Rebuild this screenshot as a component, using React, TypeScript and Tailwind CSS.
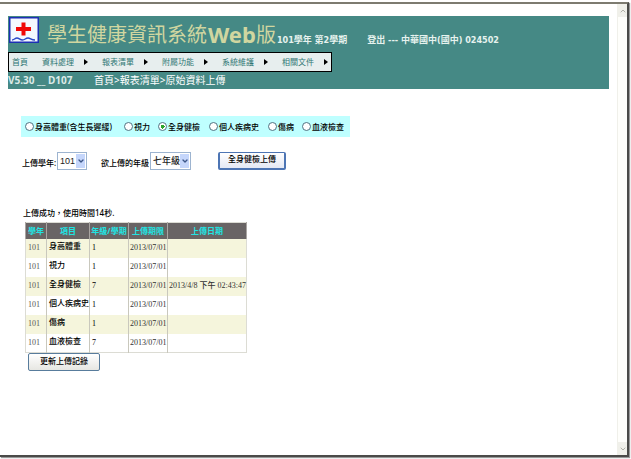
import { ChevronDown, ChevronUp } from "lucide-react";
import clsx from "clsx";

interface UploadRecord {
  year: string;
  item: string;
  grade: string;
  deadline: string;
  uploadedAt: string;
}

const menuItems = ["資料處理", "報表清單", "附屬功能", "系統維護", "相關文件"];

const uploadTypes = [
  "身高體重(含生長遲緩)",
  "視力",
  "全身健檢",
  "個人疾病史",
  "傷病",
  "血液檢查",
];

const columns = [
  { label: "學年", width: "w-[21px]" },
  { label: "項目", width: "w-[43px]" },
  { label: "年級/學期", width: "w-[39px]" },
  { label: "上傳期限", width: "w-[39px]" },
  { label: "上傳日期", width: "w-[78px]" },
];

const records: UploadRecord[] = [
  { year: "101", item: "身高體重", grade: "1", deadline: "2013/07/01", uploadedAt: "" },
  { year: "101", item: "視力", grade: "1", deadline: "2013/07/01", uploadedAt: "" },
  {
    year: "101",
    item: "全身健檢",
    grade: "7",
    deadline: "2013/07/01",
    uploadedAt: "2013/4/8 下午 02:43:47",
  },
  { year: "101", item: "個人疾病史", grade: "1", deadline: "2013/07/01", uploadedAt: "" },
  { year: "101", item: "傷病", grade: "1", deadline: "2013/07/01", uploadedAt: "" },
  { year: "101", item: "血液檢查", grade: "7", deadline: "2013/07/01", uploadedAt: "" },
];

function Logo() {
  return (
    <svg viewBox="0 0 30 26" className="h-[26px] w-[30px] shrink-0" aria-hidden="true">
      <rect x="0.75" y="0.75" width="28.5" height="24.5" fill="#f4f8ff" stroke="#1c2fb4" strokeWidth="1.5" />
      <path d="M12.5 5.5h4v4.500h5.500v4h-5.500v4.500h-4v-4.500h-5.500v-4h5.500z" fill="#f00808" />
      <path
        d="M3 23c2 0 3-2 5-2s3 2 5.500 2 3-2 5.500-2 3 2 7 2"
        fill="none"
        stroke="#2a46c8"
        strokeWidth="1.5"
      />
    </svg>
  );
}

function Header() {
  return (
    <header className="bg-[#458985] pt-px">
      <div className="flex h-[35px] items-start pl-px">
        <Logo />
        <h1 className="ml-2 flex h-[35px] items-center whitespace-nowrap text-[20px] leading-[35px] text-[#d0d6a0]">
          學生健康資訊系統
          <span className="ml-px text-[22px] font-bold">Web</span>版
        </h1>
        <p className="flex h-[35px] items-center gap-5 whitespace-nowrap pt-3 pl-px font-['DejaVu_Sans_Condensed','DejaVu_Sans','Noto_Sans_CJK_TC',sans-serif] text-[9px] font-bold text-[#e6f2ee]">
          <span>101學年 第2學期</span>
          <span>
            <a href="#logout">登出</a> --- 中華國中(國中) 024502
          </span>
        </p>
      </div>
      <nav className="flex h-5 w-[324px] items-center border border-black bg-[#e7eeee] pl-[3px] text-[8px] text-[#2f7774]">
        <a href="#home" className="w-[30px] shrink-0">
          首頁
        </a>
        {menuItems.map((item) => (
          <button
            key={item}
            type="button"
            className="flex w-[60px] shrink-0 items-center gap-[10px] whitespace-nowrap last:w-auto"
          >
            {item}
            <svg viewBox="0 0 4 6" className="h-[6px] w-1" aria-hidden="true">
              <path d="M0 0L4 3L0 6z" fill="#000" />
            </svg>
          </button>
        ))}
      </nav>
      <div className="flex h-[17px] items-center text-[10px] text-white">
        <span className="w-[86px] font-bold text-[#dcebe8]">V5.30 __ D107</span>
        <span>首頁&gt;報表清單&gt;原始資料上傳</span>
      </div>
    </header>
  );
}

interface SelectProps {
  id: string;
  options: string[];
  className: string;
}

function Select({ id, options, className }: SelectProps) {
  return (
    <div className={clsx("relative h-[18px] border border-[#9db4d0] bg-white", className)}>
      <select
        id={id}
        className="block h-4 w-full appearance-none pl-[2px] font-['Liberation_Sans','Noto_Sans_CJK_TC',sans-serif] text-[9px] leading-4 text-[#222]"
      >
        {options.map((option) => (
          <option key={option}>{option}</option>
        ))}
      </select>
      <span className="pointer-events-none absolute inset-y-px right-px flex w-[9px] items-center justify-center bg-[#c5d6fb]">
        <ChevronDown size={8} strokeWidth={4} color="#3c5687" />
      </span>
    </div>
  );
}

function UploadForm() {
  return (
    <form>
      <fieldset className="grid h-[21px] w-[329px] grid-cols-[99px_34px_51px_59px_34px_auto] items-center bg-[#bfffff] pl-1">
        {uploadTypes.map((type) => (
          <label key={type} className="flex items-center gap-px whitespace-nowrap">
            <input
              type="radio"
              name="type"
              defaultChecked={type === "全身健檢"}
              className="size-[9px] shrink-0 appearance-none rounded-full border border-[#4f7484] bg-white checked:bg-[radial-gradient(#2aa52a_2px,white_2px)]"
            />
            {type}
          </label>
        ))}
      </fieldset>
      <div className="mt-[15px] flex items-center pl-px">
        <label htmlFor="year" className="w-[35px] whitespace-nowrap pt-1">
          上傳學年:
        </label>
        <Select id="year" options={["101", "100"]} className="w-[30px]" />
        <label htmlFor="grade" className="ml-[14px] w-[49px] whitespace-nowrap pt-1">
          欲上傳的年級
        </label>
        <Select id="grade" options={["七年級", "八年級", "九年級"]} className="w-[41px]" />
        <button
          type="button"
          className="ml-[27px] h-[18px] w-[68px] rounded-[2px] border-2 border-t border-[#4d75b4] bg-linear-to-b from-white to-[#e4e8f4] pb-[3px]"
        >
          全身健檢上傳
        </button>
      </div>
    </form>
  );
}

function RecordTable() {
  return (
    <table className="table-fixed border-collapse border border-[#dcdcd4] whitespace-nowrap">
      <thead>
        <tr className="h-4 bg-[#696465] text-[#20e4e4]">
          {columns.map((column) => (
            <th key={column.label} className={clsx("border-x border-[#a9a5a2] p-0 font-bold", column.width)}>
              {column.label}
            </th>
          ))}
        </tr>
      </thead>
      <tbody className="font-['Liberation_Serif','Noto_Sans_CJK_TC',serif]">
        {records.map((record) => (
          <tr key={record.item} className="h-[19px] odd:bg-[#f5f5dc]">
            <td className="border-r border-[#c9c8bd] p-0 pl-[2px] text-[#555]">{record.year}</td>
            <td className="border-r border-[#c9c8bd] p-0 pb-[2px] pl-[2px]">{record.item}</td>
            <td className="border-r border-[#c9c8bd] p-0 pl-[2px]">{record.grade}</td>
            <td className="border-r border-[#c9c8bd] p-0 pl-px text-[#333]">{record.deadline}</td>
            <td className="p-0 pl-px text-[#333]">{record.uploadedAt}</td>
          </tr>
        ))}
      </tbody>
    </table>
  );
}

function ScrollBar() {
  return (
    <div className="flex w-[10px] shrink-0 flex-col justify-between border-l border-[#f0f0ea] bg-[#fefefb] text-[#b0b0a8]">
      <button type="button" aria-label="向上捲動" className="flex h-[13px] items-center justify-center bg-[#f0f0ea]">
        <ChevronUp size={8} strokeWidth={3} />
      </button>
      <button type="button" aria-label="向下捲動" className="flex h-[13px] items-center justify-center bg-[#f0f0ea]">
        <ChevronDown size={8} strokeWidth={3} />
      </button>
    </div>
  );
}

export default function App() {
  return (
    <div className="h-screen bg-white pt-[2px] pr-[2px] pb-[2px] font-['Noto_Sans','Noto_Sans_CJK_TC',sans-serif]">
      <div className="flex h-full border-t-2 border-r-2 border-b-2 border-t-[#7d7b70] border-r-[#4a4a48] border-b-[#4a4a48] shadow-[1px_1px_1px_#999]">
        <div className="min-w-0 flex-1 pt-3 pr-[8px] pl-2 text-[8px] text-black">
          <Header />
          <main className="pt-[27px] pl-[13px] font-medium">
            <UploadForm />
            <section className="mt-[37px]">
              <p className="h-[15px] pl-[2px] leading-3">上傳成功，使用時間14秒.</p>
              <div className="pl-1">
                <RecordTable />
                <button
                  type="button"
                  className="ml-[3px] h-[18px] w-[72px] rounded-[2px] border border-[#587c9c] bg-linear-to-b from-white to-[#e6e6e2] pb-[3px]"
                >
                  更新上傳記錄
                </button>
              </div>
            </section>
          </main>
        </div>
        <ScrollBar />
      </div>
    </div>
  );
}
